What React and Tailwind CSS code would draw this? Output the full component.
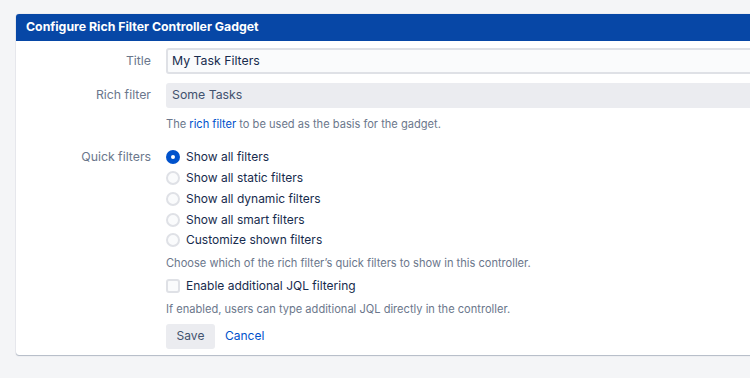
import React from "react";

const font = { fontFamily: "Inter, 'Liberation Sans', sans-serif" };

function Radio({ checked, label }) {
  return (
    <label className="flex items-center h-[20.75px] gap-[6px] text-[12px] text-[#172b4d]">
      {checked ? (
        <span className="w-[14px] h-[14px] rounded-full bg-[#0052cc] flex items-center justify-center">
          <span className="w-[4px] h-[4px] rounded-full bg-white" />
        </span>
      ) : (
        <span className="w-[14px] h-[14px] rounded-full bg-[#fafbfc] border-2 border-[#dfe1e6]" />
      )}
      <span>{label}</span>
    </label>
  );
}

export default function App() {
  return (
    <div className="w-[750px] h-[378px] bg-[#f4f5f7] overflow-hidden pt-[14px] pl-[16px]" style={font}>
      <div className="w-[760px] bg-white rounded-[3px] shadow-[0_1px_1px_rgba(9,30,66,0.25),0_0_1px_rgba(9,30,66,0.31)] overflow-hidden">
        <div className="h-[27px] bg-[#0747a6] text-white font-bold text-[12.3px] flex items-center pl-[10px]">
          Configure Rich Filter Controller Gadget
        </div>
        <div className="grid grid-cols-[135px_1fr] gap-x-[15px] pt-[7px] pb-[6px]">
          <div className="text-right text-[12.3px] text-[#6b778c] h-[26px] pt-[1px] flex items-center justify-end">Title</div>
          <div className="h-[26px] bg-[#fafbfc] border-2 border-[#dfe1e6] rounded-[3px] flex items-center px-[4px] pt-[1px] text-[12.3px] text-[#172b4d]">
            My Task Filters
          </div>

          <div className="text-right text-[12.3px] text-[#6b778c] h-[25px] mt-[9px] flex items-center justify-end">Rich filter</div>
          <div className="h-[25px] mt-[9px] bg-[#ebecf0] rounded-[3px] flex items-center px-[6px] text-[12.3px] text-[#42526e]">
            Some Tasks
          </div>

          <div />
          <div className="text-[11.1px] text-[#6b778c] mt-[9px] leading-[14px]">
            The <span className="text-[#0052cc]">rich filter</span> to be used as the basis for the gadget.
          </div>

          <div className="text-right text-[12.3px] text-[#6b778c] mt-[16px] h-[20.75px] flex items-center justify-end">Quick filters</div>
          <div className="mt-[16px] flex flex-col">
            <Radio checked label="Show all filters" />
            <Radio label="Show all static filters" />
            <Radio label="Show all dynamic filters" />
            <Radio label="Show all smart filters" />
            <Radio label="Customize shown filters" />
            <div className="text-[11.1px] text-[#6b778c] mt-[5px] leading-[14px]">
              Choose which of the rich filter’s quick filters to show in this controller.
            </div>
            <label className="flex items-center gap-[6px] mt-[6px] h-[20px] text-[12px] text-[#172b4d]">
              <span className="w-[14px] h-[14px] rounded-[3px] bg-[#fafbfc] border-2 border-[#dfe1e6]" />
              <span>Enable additional JQL filtering</span>
            </label>
            <div className="text-[11.1px] text-[#6b778c] mt-[6px] leading-[14px]">
              If enabled, users can type additional JQL directly in the controller.
            </div>
            <div className="flex items-center gap-[10px] mt-[8px]">
              <button className="h-[25px] w-[49px] bg-[#ebecf0] rounded-[3px] text-[12px] text-[#42526e]">Save</button>
              <button className="text-[12px] text-[#0052cc]">Cancel</button>
            </div>
          </div>
        </div>
      </div>
    </div>
  );
}
